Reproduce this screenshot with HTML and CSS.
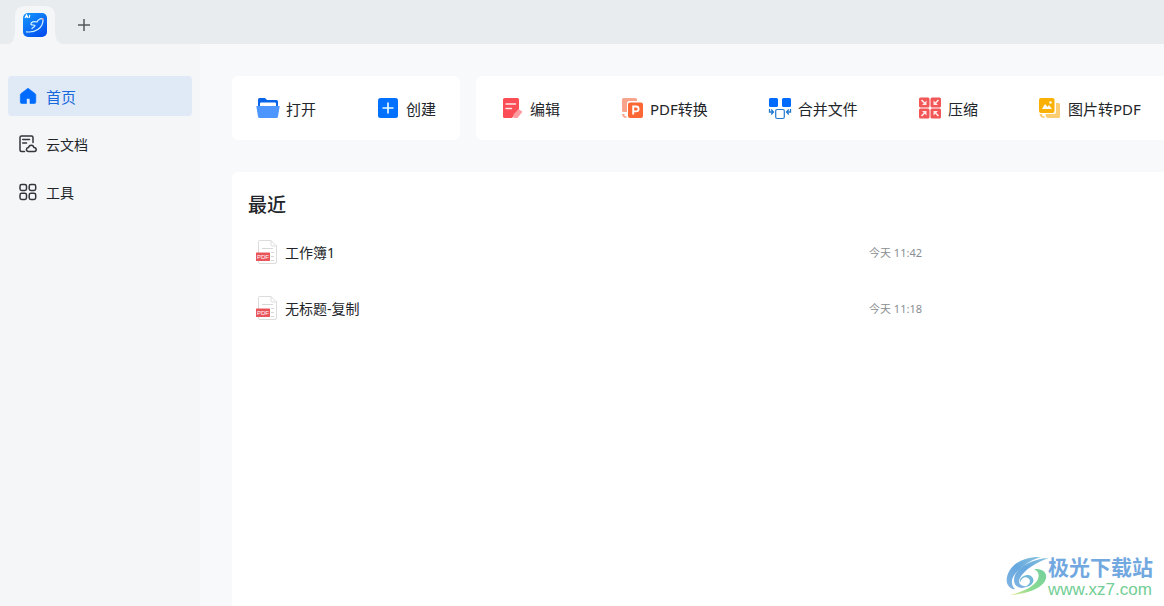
FILE: index.html
```html
<!DOCTYPE html>
<html lang="zh-CN">
<head>
<meta charset="utf-8">
<title>首页</title>
<link rel="stylesheet" href="styles.css">
</head>
<body>
<div class="app">
  <header class="tabbar">
    <button class="tab" type="button" aria-label="首页">
      <svg class="tab-shape" width="56" height="38" viewBox="0 0 56 38"><path d="M0 38C6 37 6 32 7 26V10Q7 0 17 0H37Q47 0 47 10V26C48 32 48 37 56 38Z" fill="#f4f6f8"/></svg>
      <svg class="app-logo" width="24" height="24" viewBox="0 0 24 24">
        <defs><linearGradient id="app-blue" x1="0" y1="0" x2="0.7" y2="1"><stop offset="0" stop-color="#1599ff"/><stop offset="1" stop-color="#0450ef"/></linearGradient></defs>
        <rect width="24" height="24" rx="5" fill="url(#app-blue)"/>
        <path d="M2 5 3.600 1.800 5 5M2.800 4h1.800M6.800 1.800 6.200 5" fill="none" stroke="#fff" stroke-width="1.100"/>
        <path d="M3.500 18.800C12 20 20.500 15 20 6C17.500 5 15 6.500 14 9C11 8 7.500 9 8 11.500C9 12.500 11 11.500 12 12.500C11 14.500 9.500 15 9 15.500" fill="none" stroke="#d5f4ff" stroke-width="1.200" stroke-linejoin="round" stroke-linecap="round"/>
        <path d="m19 5 2 1-1.300 1z" fill="#ff6670"/>
      </svg>
    </button>
    <button class="new-tab" type="button" aria-label="新建标签">
      <svg width="14" height="14" viewBox="0 0 14 14"><path d="M7 1v12M1 7h12" stroke="#55585c" stroke-width="1.500"/></svg>
    </button>
  </header>
  <div class="body">
    <nav class="sidebar">
      <a class="nav-item active" href="#home">
        <svg width="20" height="20" viewBox="0 0 20 20"><path d="M10 2.200 17 7.500Q17.800 8.200 17.800 9V16Q17.800 17.500 16.300 17.500H12V13.500Q12 12.500 11 12.500H9.500Q8.500 12.500 8.500 13.500V17.500H4Q2.300 17.500 2.300 16V9Q2.300 8.200 3 7.500Z" fill="#006cff" stroke="#006cff" stroke-width=".6" stroke-linejoin="round"/></svg>
        首页</a>
      <a class="nav-item" href="#cloud">
        <svg width="20" height="20" viewBox="0 0 20 20" fill="none" stroke="#33363b" stroke-width="1.500" stroke-linecap="round" stroke-linejoin="round"><path d="M6.500 17.500H3.500Q2 17.500 2 16V3.500Q2 2 3.500 2H13.500Q15 2 15 3.500V8.500M4.700 5.500H11.500M4.700 9H8.500"/><path d="M10.300 17.500C7.500 17 8 13.700 10.500 13.600C11.200 10.300 15.500 10.500 15.800 13.500C19 13.600 18.800 17.200 16.300 17.500Z"/></svg>
        云文档</a>
      <a class="nav-item" href="#tools">
        <svg width="20" height="20" viewBox="0 0 20 20" fill="none" stroke="#33363b" stroke-width="1.500"><rect x="2" y="2.500" width="6.500" height="6" rx="1.700"/><rect x="11.200" y="2.500" width="6.500" height="6" rx="1.700"/><rect x="2" y="11.200" width="6.500" height="6.300" rx="1.700"/><rect x="11.200" y="11.200" width="6.500" height="6.300" rx="1.700"/></svg>
        工具</a>
    </nav>
    <main class="content">
      <div class="toolbars">
        <div class="toolbar">
          <button class="tool" type="button">
            <svg width="24" height="24" viewBox="0 0 24 24"><path d="M2 3.500Q2 2 3.500 2H9L11 4H20.500Q22 4 22 5.500V12H2Z" fill="#0864e8"/><path d="M4 10V7.500Q4 6.500 5 6.500H19Q20 6.500 20 7.500V10Z" fill="#fff"/><path d="M.3 10H23.700L22 20.500Q21.800 22 20.300 22H3.700Q2.200 22 2 20.500Z" fill="#4d96ff"/></svg>
            打开</button>
          <button class="tool" type="button">
            <svg width="24" height="24" viewBox="0 0 24 24"><rect x="2" y="2" width="20" height="20" rx="2.500" fill="#0070ff"/><path d="M12 6.500v11M6.500 12h11" stroke="#e6fbff" stroke-width="1.700"/></svg>
            创建</button>
        </div>
        <div class="toolbar wide">
          <button class="tool" type="button">
            <svg width="24" height="24" viewBox="0 0 24 24"><path d="M4.500 2H17.500Q19 2 19 3.500V14L12 22H4.500Q3 22 3 20.500V3.500Q3 2 4.500 2Z" fill="#fc4c55"/><path d="M6 8H15.500M6 12.500H11.500" stroke="#ffe7e8" stroke-width="1.500" stroke-linecap="round"/><path d="m18.500 13 4 2.700L17.500 22H13.500V18.500Z" fill="#ff9ca2"/></svg>
            编辑</button>
          <button class="tool" type="button">
            <svg width="24" height="24" viewBox="0 0 24 24"><path d="M3.500 2H15.500Q17 2 17 3.500V5H9.500Q7 5 7 7.500V16H3.500Q2 16 2 14.500V3.500Q2 2 3.500 2Z" fill="#f9a58d"/><path d="M2 18 5 18 4 19.500 6.500 20.500V22Q2.500 22 2 18Z" fill="#f9a58d"/><rect x="8" y="6.500" width="15" height="15.500" rx="2" fill="#fb6836"/><path d="M13.200 18.500V10.500H16Q18.600 10.500 18.600 13T16 15.400H13.200" fill="none" stroke="#fff" stroke-width="1.900"/></svg>
            PDF转换</button>
          <button class="tool" type="button">
            <svg width="24" height="24" viewBox="0 0 24 24"><rect x="1" y="2" width="9" height="9" rx="1.500" fill="#006cff"/><rect x="14" y="2" width="9" height="9" rx="1.500" fill="#006cff"/><rect x="7.700" y="13.500" width="8.600" height="9" rx="1.500" fill="#fff" stroke="#2379cd" stroke-width="1.200"/><path d="M1.500 13V16H5M3.200 13.500 5.500 16 3.200 18.500M22.500 13V16H19M20.800 13.500 18.500 16 20.800 18.500" fill="none" stroke="#2379cd" stroke-width="1.300"/></svg>
            合并文件</button>
          <button class="tool" type="button">
            <svg width="24" height="24" viewBox="0 0 24 24"><g fill="#f25656"><rect x="1" y="1.500" width="10.500" height="10" rx="1.500"/><rect x="12.500" y="1.500" width="10.500" height="10" rx="1.500"/><rect x="1" y="12.500" width="10.500" height="10" rx="1.500"/><rect x="12.500" y="12.500" width="10.500" height="10" rx="1.500"/></g><path d="m3.500 4 3 3M20.500 4l-3 3M3.500 20l3-3M20.500 20l-3-3" stroke="#ffe9e9" stroke-width="1.600"/><path d="M8.500 4.500v4.500h-4.500zM15.500 4.500v4.500h4.500zM8.500 19.500v-4.500h-4.500zM15.500 19.500v-4.500h4.500z" fill="#ffe9e9"/></svg>
            压缩</button>
          <button class="tool" type="button">
            <svg width="24" height="24" viewBox="0 0 24 24"><path d="M18 7H20.500Q22 7 22 8.500V20.500Q22 22 20.500 22H9.500Q7.500 21.500 7.500 18H15.500Q18 18 18 15.500Z" fill="#fccd70"/><path d="M1.500 18H4.500L4 19.500 6.500 20.500V22Q2 22 1.500 18Z" fill="#fccd70"/><rect x="1" y="2" width="15.500" height="15" rx="2" fill="#fbb005"/><path d="m4 13 3-5 2.500 3L11 9l3 4Z" fill="#fff"/><circle cx="12.500" cy="6.500" r="1.200" fill="#fff"/></svg>
            图片转PDF</button>
        </div>
      </div>
      <section class="recent">
        <h1 class="recent-title">最近</h1>
        <table class="files">
          <tr>
            <td class="file-name"><a class="file-link" href="#file-1"><svg class="file-icon" width="22" height="24" viewBox="0 0 22 24"><path d="M3.500.5H15L20.500 6V22Q20.500 23.500 19 23.500H4Q2.500 23.500 2.500 22V1.500Q2.500.5 3.500.5ZM15 .5V4.500Q15 6 16.500 6H20.500" fill="#fff" stroke="#dcdcdc"/><path d="M6 8.500H17M15 12.500h3M15 16.500h3M15 20.500h3" stroke="#d8d8d8"/><rect y="12.500" width="14" height="8.500" rx=".5" fill="#e9545b"/><text x="7" y="19.200" text-anchor="middle" class="pdf-label">PDF</text></svg>工作簿1</a></td>
            <td class="file-time">今天 11:42</td>
          </tr>
          <tr>
            <td class="file-name"><a class="file-link" href="#file-2"><svg class="file-icon" width="22" height="24" viewBox="0 0 22 24"><path d="M3.500.5H15L20.500 6V22Q20.500 23.500 19 23.500H4Q2.500 23.500 2.500 22V1.500Q2.500.5 3.500.5ZM15 .5V4.500Q15 6 16.500 6H20.500" fill="#fff" stroke="#dcdcdc"/><path d="M6 8.500H17M15 12.500h3M15 16.500h3M15 20.500h3" stroke="#d8d8d8"/><rect y="12.500" width="14" height="8.500" rx=".5" fill="#e9545b"/><text x="7" y="19.200" text-anchor="middle" class="pdf-label">PDF</text></svg>无标题-复制</a></td>
            <td class="file-time">今天 11:18</td>
          </tr>
        </table>
      </section>
    </main>
  </div>
  <div class="watermark">
    <svg width="42" height="42" viewBox="0 0 42 42">
      <defs><linearGradient id="swirl-blue" x1="1" y1="0" x2="0" y2="1"><stop offset="0" stop-color="#8cc4dd"/><stop offset=".5" stop-color="#66a8df"/><stop offset="1" stop-color="#82b4e3"/></linearGradient><linearGradient id="swirl-green" x1="1" y1="0" x2="0" y2="1"><stop offset="0" stop-color="#72cf9c"/><stop offset=".6" stop-color="#8bdb92"/><stop offset="1" stop-color="#dce68c"/></linearGradient></defs>
      <path d="M35 2C20 1 4 8 1 22C-1 31 6 35 9 34C3 28 6 20 14 14C20 8 28 4 35 2Z" fill="url(#swirl-blue)"/>
      <path d="M43 3C24 4 8 14 8 25C8 33 17 35 21 31C15 32 11 28 14 23C18 15 31 7 43 3Z" fill="url(#swirl-blue)"/>
      <path d="M14 28C12 22 22 17 26 22C30 26 25 32 19 32C25 29 25 25 22 23C18 21 15 24 14 28Z" fill="#70b7d8"/>
      <path d="M28 14C35 14 41 16 40 23C38 33 22 39 4 40C17 37 29 31 32 24C34 18 31 16 28 14Z" fill="url(#swirl-green)"/>
    </svg>
    <div class="watermark-text"><div class="watermark-name">极光下载站</div><div class="watermark-url">www.xz7.com</div></div>
  </div>
</div>
</body>
</html>
```
FILE: styles.css
```css
* { box-sizing: border-box; }
body {
  margin: 0;
  font-family: "Noto Sans", "Noto Sans CJK SC", sans-serif;
  font-size: 14px;
  color: #222529;
}
button {
  padding: 0;
  border: 0;
  background: none;
  font: inherit;
  color: inherit;
}
a { color: inherit; text-decoration: none; }
svg { display: block; flex: none; }
.app {
  display: flex;
  flex-direction: column;
  min-height: 100vh;
  position: relative;
  overflow: hidden;
}
.tabbar {
  display: flex;
  align-items: flex-end;
  gap: 12px;
  height: 44px;
  padding: 0 8px;
  background: #e8ecef;
}
.tab { position: relative; }
.app-logo { position: absolute; left: 15px; top: 7px; }
.new-tab { display: grid; place-items: center; height: 38px; width: 16px; }
.body { display: flex; flex: 1; }
.sidebar {
  display: flex;
  flex-direction: column;
  gap: 8px;
  flex: none;
  width: 200px;
  padding: 32px 8px;
  background: #f4f6f8;
}
.nav-item {
  display: flex;
  align-items: center;
  gap: 8px;
  height: 40px;
  padding: 0 10px;
  border-radius: 4px;
}
.nav-item.active { background: #e0eaf7; color: #1769dc; font-size: 15px; }
.content {
  display: flex;
  flex-direction: column;
  gap: 32px;
  flex: 1;
  min-width: 0;
  padding: 32px 0 0 32px;
  background: #f8f9fb;
}
.toolbars { display: flex; gap: 16px; }
.toolbar {
  display: flex;
  gap: 60px;
  flex: none;
  height: 64px;
  padding: 0 24px;
  background: #fff;
  border-radius: 6px;
}
.toolbar.wide {
  flex: 1;
  min-width: 0;
  overflow: hidden;
  border-radius: 6px 0 0 6px;
}
.tool {
  display: flex;
  align-items: center;
  gap: 6px;
  flex: none;
  font-size: 15px;
  white-space: nowrap;
}
.recent {
  flex: 1;
  padding: 16px 16px 0;
  background: #fff;
  border-radius: 6px 0 0 0;
}
.recent-title {
  margin: 0 0 2px;
  font-size: 19px;
  font-weight: 500;
  line-height: 34px;
}
.files { width: 100%; border-collapse: collapse; }
.files td { height: 56px; padding: 0; }
.file-name { width: 69%; }
.file-link { display: flex; align-items: center; gap: 7px; padding-left: 8px; }
.file-time { font-size: 11px; color: #8b8e92; }
.pdf-label { font-family: "Liberation Sans", sans-serif; font-size: 6px; fill: #fff; }
.watermark {
  position: absolute;
  right: 11px;
  bottom: 6px;
  display: flex;
  align-items: center;
}
.watermark-name {
  font-family: "Noto Sans CJK SC", sans-serif;
  font-size: 21px;
  font-weight: 700;
  line-height: 28px;
  color: #72a8e0;
}
.watermark-url {
  font-family: "Liberation Sans", sans-serif;
  font-size: 17px;
  line-height: 20px;
  color: #72ce94;
}
```
